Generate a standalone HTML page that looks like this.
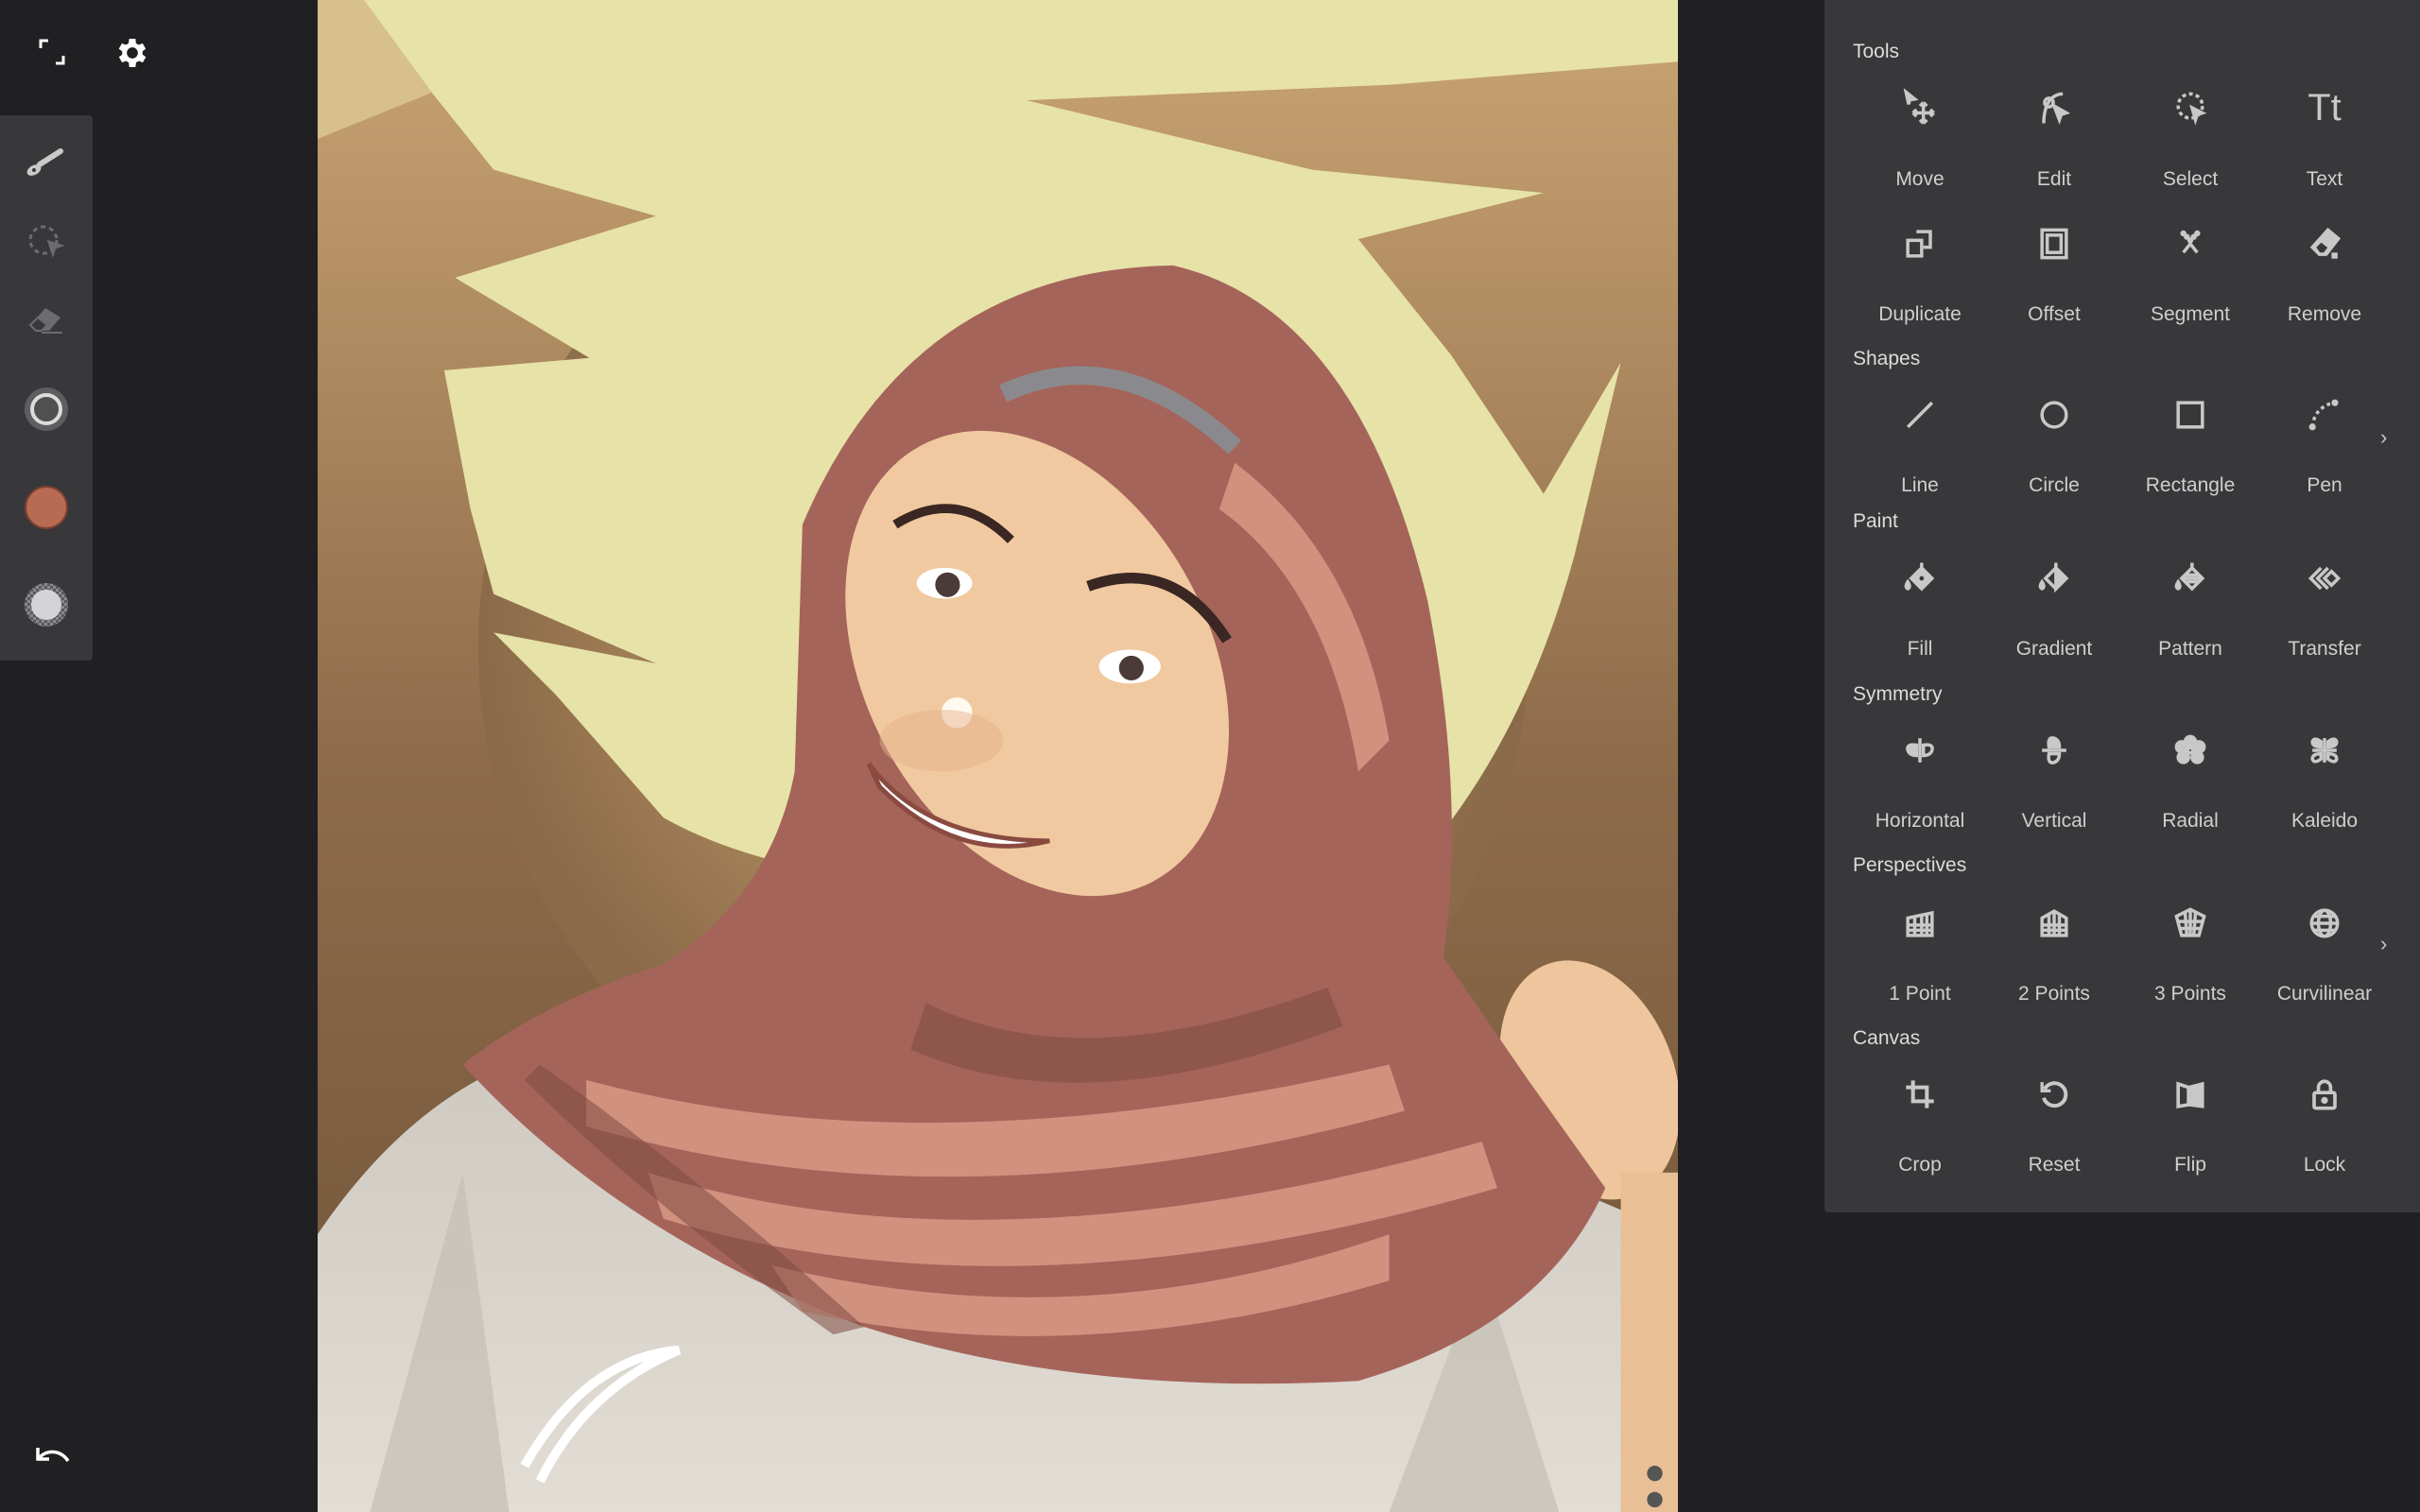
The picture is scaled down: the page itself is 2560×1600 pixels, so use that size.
<!DOCTYPE html>
<html><head><meta charset="utf-8"><style>
*{margin:0;padding:0;box-sizing:border-box}
body{width:2560px;height:1600px;background:#201f22;position:relative;overflow:hidden;font-family:"Liberation Sans",sans-serif}
.abs{position:absolute}
#panel{left:1930px;top:0;width:630px;height:1283px;background:#38373a;border-bottom-left-radius:4px}
.sec{position:absolute;left:30px;font-size:21px;color:#dcdcdc;line-height:24px}
.lab{position:absolute;width:180px;margin-left:-90px;text-align:center;font-size:21px;color:#cfcfcf;line-height:24px}
.ic{position:absolute;width:44px;height:44px;margin-left:-22px;margin-top:-22px}
.ic svg{width:44px;height:44px;fill:none;stroke:#c8c8c8;stroke-width:1.9}
#lbar{left:0;top:122px;width:98px;height:577px;background:#38373a;border-radius:0 4px 4px 0}
</style></head><body>

<svg class="abs" style="left:40px;top:40px" width="30" height="30" viewBox="0 0 30 30" fill="none" stroke="#fff" stroke-width="3"><path d="M3 11V3h8M27 19v8h-8"/></svg>
<svg class="abs" style="left:120px;top:36px" width="40" height="40" viewBox="0 0 24 24"><path fill="#fff" d="M19.4 13a7.6 7.6 0 0 0 0-2l2.1-1.6-2-3.5-2.5 1a7 7 0 0 0-1.7-1L15 3h-4l-.4 2.9a7 7 0 0 0-1.7 1l-2.5-1-2 3.5L6.6 11a7.6 7.6 0 0 0 0 2l-2.1 1.6 2 3.5 2.5-1a7 7 0 0 0 1.7 1L11 21h4l.4-2.9a7 7 0 0 0 1.7-1l2.5 1 2-3.5zM13 15.5a3.5 3.5 0 1 1 0-7 3.5 3.5 0 0 1 0 7z" transform="translate(-1 0)"/></svg>
<svg class="abs" style="left:36px;top:1528px" width="40" height="30" viewBox="0 0 40 30" fill="none" stroke="#fff" stroke-width="3.5"><path d="M6 14c8-8 22-8 30 4"/><path d="M4 4v12h12" fill="none"/></svg>

<div id="lbar" class="abs"></div>
<svg class="abs" style="left:26px;top:150px" width="44" height="40" viewBox="0 0 44 40"><path d="M16 24L38 10" stroke="#c9c9c9" stroke-width="6" stroke-linecap="round"/><ellipse cx="10" cy="30" rx="8" ry="5" fill="#c9c9c9" transform="rotate(-30 10 30)"/><circle cx="10" cy="30" r="2" fill="#38373a"/></svg>
<svg class="abs" style="left:28px;top:236px" width="42" height="38" viewBox="0 0 42 38" fill="none" stroke="#6c6b6e" stroke-width="3"><circle cx="18" cy="18" r="14" stroke-dasharray="5 4"/><path d="M24 20l12 4-6 2-2 6z" fill="#6c6b6e"/></svg>
<svg class="abs" style="left:28px;top:322px" width="42" height="36" viewBox="0 0 42 36"><path d="M20 4l16 10-12 14H10L4 22z" fill="#6c6b6e"/><path d="M4 22l8-8 10 8-6 6H10z" fill="#38373a" stroke="#6c6b6e" stroke-width="2"/><path d="M16 30h22" stroke="#6c6b6e" stroke-width="2"/></svg>
<div class="abs" style="left:26px;top:410px;width:46px;height:46px;border-radius:50%;background:#5e5d60"></div>
<div class="abs" style="left:32px;top:416px;width:34px;height:34px;border-radius:50%;border:4px solid #dcdcdc;background:#505052"></div>
<div class="abs" style="left:26px;top:514px;width:46px;height:46px;border-radius:50%;background:#b66b52;border:2px solid #7a4030"></div>
<div class="abs" style="left:26px;top:617px;width:46px;height:46px;border-radius:50%;background:repeating-conic-gradient(#8a8a8c 0 25%,#5a5a5c 0 50%) 0 0/6px 6px"></div>
<div class="abs" style="left:33px;top:624px;width:32px;height:32px;border-radius:50%;background:#d4d4d6"></div>

<svg class="abs" style="left:336px;top:0" width="1439" height="1600" viewBox="206 0 881 980" preserveAspectRatio="none">
<defs>
<linearGradient id="bg" x1="0" y1="0" x2="0" y2="1"><stop offset="0" stop-color="#c9a473"/><stop offset=".5" stop-color="#8e6c4a"/><stop offset="1" stop-color="#6e5238"/></linearGradient>
<radialGradient id="halo" cx=".5" cy=".45" r=".5"><stop offset=".6" stop-color="#a7845a"/><stop offset="1" stop-color="#8a6a48"/></radialGradient>
<linearGradient id="sh" x1="0" y1="0" x2="0" y2="1"><stop offset="0" stop-color="#cfcac1"/><stop offset="1" stop-color="#e2ddd5"/></linearGradient>
</defs>
<rect x="206" y="0" width="881" height="980" fill="url(#bg)"/>
<circle cx="650" cy="420" r="340" fill="url(#halo)"/>
<path fill="#e7e2a8" d="M236,0 L1087,0 L1087,40 L900,55 L665,65 L850,110 L1000,125 L880,155 L940,230 L1000,320 L1050,235 L1020,360 Q990,470 930,545 Q800,590 650,580 Q500,570 430,530 L360,450 L320,410 L425,430 L320,385 L305,330 L288,240 L382,232 L295,180 L425,140 L320,110 L280,60 Z"/>
<path fill="#d7c08c" d="M206,0 L236,0 L280,60 L206,90 Z"/>
<path fill="url(#sh)" d="M206,800 Q260,720 330,690 L600,760 L900,720 L1087,800 L1087,980 L206,980 Z"/>
<path fill="#c5bfb5" d="M240,980 L300,760 L330,980 Z M900,980 L960,820 L1010,980 Z" opacity=".7"/>
<ellipse cx="1030" cy="700" rx="55" ry="80" fill="#eec59c" transform="rotate(-20 1030 700)"/>
<rect x="1050" y="760" width="37" height="220" fill="#e9bf96"/>
<path fill="#a5645a" d="M520,340 Q590,175 760,172 Q880,200 925,390 Q950,520 935,620 L990,700 L1040,770 Q1000,860 880,895 Q700,905 560,860 Q400,800 300,690 Q350,650 430,625 Q500,580 515,500 Z"/>
<path fill="#e0a08c" opacity=".75" d="M380,700 Q600,760 900,690 L910,720 Q620,800 380,730 Z M420,760 Q640,830 960,740 L970,770 Q660,860 430,790 Z M500,820 Q700,870 900,800 L900,830 Q700,890 520,850 Z M800,300 Q880,360 900,480 L880,500 Q860,380 790,330 Z"/>
<path fill="#7e4a42" opacity=".55" d="M600,650 Q700,700 860,640 L870,665 Q700,730 590,680 Z M350,690 Q450,760 560,860 L540,865 Q420,780 340,700 Z"/>
<ellipse cx="672" cy="430" rx="112" ry="160" fill="#f1c9a0" transform="rotate(-28 672 430)"/>
<path d="M650,255 Q725,220 800,290" stroke="#8a8a8e" stroke-width="12" fill="none"/>
<path d="M580,340 Q620,315 655,350" stroke="#3a2622" stroke-width="6" fill="none"/>
<path d="M705,380 Q760,360 795,415" stroke="#3a2622" stroke-width="7" fill="none"/>
<ellipse cx="612" cy="378" rx="18" ry="10" fill="#fff"/><circle cx="614" cy="379" r="8" fill="#4a3a38"/>
<ellipse cx="732" cy="432" rx="20" ry="11" fill="#fff"/><circle cx="733" cy="433" r="8" fill="#4a3a38"/>
<path d="M563,495 Q600,545 680,545 Q620,560 570,510 Z" fill="#fff" stroke="#8a4a40" stroke-width="3"/>
<circle cx="620" cy="462" r="10" fill="#fffaf0"/>
<ellipse cx="610" cy="480" rx="40" ry="20" fill="#e6b28a" opacity=".5"/>
<path d="M340,950 Q380,880 440,875 Q380,900 350,960" stroke="#fff" stroke-width="6" fill="none"/>
<circle cx="1072" cy="955" r="5" fill="#555"/><circle cx="1072" cy="972" r="5" fill="#555"/>
</svg>

<div id="panel" class="abs">
<div class="sec" style="top:43px">Tools</div>
<div class="sec" style="top:368px">Shapes</div>
<div class="sec" style="top:540px">Paint</div>
<div class="sec" style="top:723px">Symmetry</div>
<div class="sec" style="top:904px">Perspectives</div>
<div class="sec" style="top:1087px">Canvas</div>

<div class="ic" style="left:101px;top:114px"><svg viewBox="0 0 24 24"><path d="M4 3l5 4-3 .5-.5 2.5z" fill="#c8c8c8"/><path d="M14 9v12M8 15h12M14 9l-2 2M14 9l2 2M14 21l-2-2M14 21l2-2M8 15l2-2M8 15l2 2M20 15l-2-2M20 15l-2 2"/></svg></div>
<div class="ic" style="left:243px;top:114px"><svg viewBox="0 0 24 24"><circle cx="9" cy="9" r="2.5"/><path d="M6 21Q6 12 10 7Q13 4 17 4"/><path d="M12 11l7 4-3 1-1 3z" fill="#c8c8c8"/></svg></div>
<div class="ic" style="left:387px;top:114px"><svg viewBox="0 0 24 24"><circle cx="12" cy="11" r="7" stroke-dasharray="2.2 1.8"/><path d="M13 12l6 3-3 1-1 3z" fill="#c8c8c8"/></svg></div>
<div class="abs" style="left:529px;top:94px;width:60px;margin-left:-30px;text-align:center;font-size:40px;color:#c8c8c8;line-height:40px">Tt</div>
<div class="lab" style="left:101px;top:178px">Move</div><div class="lab" style="left:243px;top:178px">Edit</div><div class="lab" style="left:387px;top:178px">Select</div><div class="lab" style="left:529px;top:178px">Text</div>
<div class="ic" style="left:101px;top:258px"><svg viewBox="0 0 24 24"><rect x="5" y="10" width="8" height="9"/><path d="M10 5h8v9h-4"/></svg></div>
<div class="ic" style="left:243px;top:258px"><svg viewBox="0 0 24 24"><rect x="5" y="4" width="14" height="16"/><rect x="8" y="7" width="8" height="10"/></svg></div>
<div class="ic" style="left:387px;top:258px"><svg viewBox="0 0 24 24"><path d="M8 17l4-5 4 5"/><circle cx="8" cy="6" r=".8" fill="#c8c8c8"/><circle cx="16" cy="6" r=".8" fill="#c8c8c8"/><circle cx="10" cy="8" r=".8" fill="#c8c8c8"/><circle cx="14" cy="8" r=".8" fill="#c8c8c8"/><circle cx="12" cy="10" r=".8" fill="#c8c8c8"/></svg></div>
<div class="ic" style="left:529px;top:258px"><svg viewBox="0 0 24 24"><path d="M14 4l6 5-7 9H9l-4-4z" fill="#c8c8c8"/><path d="M6 14l4-4 5 4-3 4H9z" fill="#38373a" stroke="#c8c8c8"/><rect x="17" y="18" width="1.6" height="1.6" fill="#c8c8c8"/></svg></div>
<div class="lab" style="left:101px;top:321px">Duplicate</div><div class="lab" style="left:243px;top:321px">Offset</div><div class="lab" style="left:387px;top:321px">Segment</div><div class="lab" style="left:529px;top:321px">Remove</div>
<div class="ic" style="left:101px;top:439px"><svg viewBox="0 0 24 24"><path d="M5 19L19 5"/></svg></div>
<div class="ic" style="left:243px;top:439px"><svg viewBox="0 0 24 24"><circle cx="12" cy="12" r="7"/></svg></div>
<div class="ic" style="left:387px;top:439px"><svg viewBox="0 0 24 24"><rect x="5" y="5" width="14" height="14"/></svg></div>
<div class="ic" style="left:529px;top:439px"><svg viewBox="0 0 24 24"><path d="M5 19Q6 8 17 5" stroke-dasharray="2 2"/><circle cx="5" cy="19" r="1" fill="#c8c8c8"/><circle cx="18" cy="5" r="1" fill="#c8c8c8"/></svg></div>
<div class="abs" style="left:588px;top:450px;font-size:22px;color:#c8c8c8">›</div>
<div class="lab" style="left:101px;top:502px">Line</div><div class="lab" style="left:243px;top:502px">Circle</div><div class="lab" style="left:387px;top:502px">Rectangle</div><div class="lab" style="left:529px;top:502px">Pen</div>
<div class="ic" style="left:101px;top:612px"><svg viewBox="0 0 24 24"><path d="M13 6l6 6-6 6-6-6z" fill="#c8c8c8"/><path d="M13 3v5"/><circle cx="13" cy="12" r="1.3" fill="#38373a" stroke="none"/><path d="M5 14q-2 3 0 4q2-1 0-4z" fill="#c8c8c8"/></svg></div>
<div class="ic" style="left:243px;top:612px"><svg viewBox="0 0 24 24"><path d="M13 6l6 6-6 6-6-6z"/><path d="M13 6l6 6-6 6z" fill="#c8c8c8"/><path d="M13 3v3"/><path d="M5 14q-2 3 0 4q2-1 0-4z" fill="#c8c8c8"/></svg></div>
<div class="ic" style="left:387px;top:612px"><svg viewBox="0 0 24 24"><path d="M13 6l6 6-6 6-6-6z"/><path d="M9 10h8M8 12h10M9 14h8"/><path d="M13 3v3"/><path d="M5 14q-2 3 0 4q2-1 0-4z" fill="#c8c8c8"/></svg></div>
<div class="ic" style="left:529px;top:612px"><svg viewBox="0 0 24 24"><path d="M10 6l-6 6 6 6M14 6l-6 6 6 6M16 8l4 4-4 4-4-4z"/></svg></div>
<div class="lab" style="left:101px;top:675px">Fill</div><div class="lab" style="left:243px;top:675px">Gradient</div><div class="lab" style="left:387px;top:675px">Pattern</div><div class="lab" style="left:529px;top:675px">Transfer</div>
<div class="ic" style="left:101px;top:794px"><svg viewBox="0 0 24 24"><path d="M12 5v14"/><path d="M10 9q-6-1-5 3q1 3 5 3z" fill="#c8c8c8"/><path d="M14 9q6-1 5 3q-1 3-5 3z"/></svg></div>
<div class="ic" style="left:243px;top:794px"><svg viewBox="0 0 24 24"><path d="M5 12h14"/><path d="M9 10q-1-6 3-5q3 1 3 5z" fill="#c8c8c8"/><path d="M9 14q-1 6 3 5q3-1 3-5z"/></svg></div>
<div class="ic" style="left:387px;top:794px"><svg viewBox="0 0 24 24" style="fill:#c8c8c8"><circle cx="12" cy="7" r="3"/><circle cx="17" cy="10" r="3"/><circle cx="16" cy="16" r="3"/><circle cx="8" cy="16" r="3"/><circle cx="7" cy="10" r="3"/><circle cx="12" cy="12" r="1.5" fill="#38373a"/></svg></div>
<div class="ic" style="left:529px;top:794px"><svg viewBox="0 0 24 24"><path d="M12 5v14M5 12h14"/><path d="M10 10q-5 0-5-3q1-3 5 0z M14 10q5 0 5-3q-1-3-5 0z" fill="#c8c8c8"/><path d="M10 14q-5 0-5 3q1 3 5 0z M14 14q5 0 5 3q-1 3-5 0z"/></svg></div>
<div class="lab" style="left:101px;top:857px">Horizontal</div><div class="lab" style="left:243px;top:857px">Vertical</div><div class="lab" style="left:387px;top:857px">Radial</div><div class="lab" style="left:529px;top:857px">Kaleido</div>
<div class="ic" style="left:101px;top:977px"><svg viewBox="0 0 24 24"><path d="M5 9l14-3v13H5z M5 13h14M5 16h14M9 8v11M13 7v12M16 6.5v12.5"/></svg></div>
<div class="ic" style="left:243px;top:977px"><svg viewBox="0 0 24 24"><path d="M5 9l7-4 7 4v10H5z M5 13h14M5 16h14M9 7v12M12 5v14M15 7v12"/></svg></div>
<div class="ic" style="left:387px;top:977px"><svg viewBox="0 0 24 24"><path d="M12 4l8 4-3 11H7L4 8z M5 11h14M6 15h12M9 6l1 13M15 6l-1 13M12 4v15"/></svg></div>
<div class="ic" style="left:529px;top:977px"><svg viewBox="0 0 24 24"><circle cx="12" cy="12" r="7.5"/><ellipse cx="12" cy="12" rx="3.5" ry="7.5"/><path d="M4.5 12h15M6 8h12M6 16h12"/></svg></div>
<div class="abs" style="left:588px;top:986px;font-size:22px;color:#c8c8c8">›</div>
<div class="lab" style="left:101px;top:1040px">1 Point</div><div class="lab" style="left:243px;top:1040px">2 Points</div><div class="lab" style="left:387px;top:1040px">3 Points</div><div class="lab" style="left:529px;top:1040px">Curvilinear</div>
<div class="ic" style="left:101px;top:1158px"><svg viewBox="0 0 24 24" style="stroke-width:2.2"><path d="M8 4v12h12M4 8h12v12"/></svg></div>
<div class="ic" style="left:243px;top:1158px"><svg viewBox="0 0 24 24" style="stroke-width:2.2"><path d="M6.5 9A6.5 6.5 0 1 1 6 14"/><path d="M5 5v5h5" stroke-width="1.8"/></svg></div>
<div class="ic" style="left:387px;top:1158px"><svg viewBox="0 0 24 24"><path d="M5 6l6 2v10l-6 1z" stroke-width="2"/><path d="M11 8l8-2v13l-8-1z" fill="#c8c8c8"/></svg></div>
<div class="ic" style="left:529px;top:1158px"><svg viewBox="0 0 24 24" style="stroke-width:2"><rect x="6" y="11" width="12" height="9" rx="1"/><path d="M8.5 11V8a3.5 3.5 0 0 1 7 0v3"/><circle cx="12" cy="15.5" r="1" fill="#c8c8c8"/></svg></div>
<div class="lab" style="left:101px;top:1221px">Crop</div><div class="lab" style="left:243px;top:1221px">Reset</div><div class="lab" style="left:387px;top:1221px">Flip</div><div class="lab" style="left:529px;top:1221px">Lock</div>
</div>
</body></html>
